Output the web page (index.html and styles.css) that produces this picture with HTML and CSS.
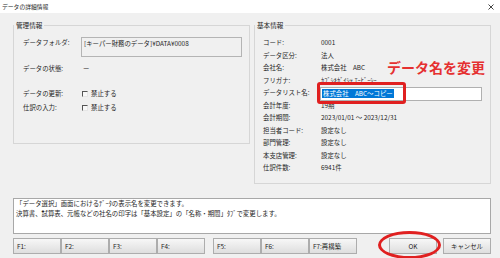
FILE: index.html
```html
<!DOCTYPE html>
<html lang="ja">
<head>
<meta charset="utf-8">
<title>データの詳細情報</title>
<link rel="stylesheet" href="styles.css">
</head>
<body>
<div class="titlebar">
  <span class="title">データの詳細情報</span>
  <svg class="close" width="6" height="6" viewBox="0 0 6 6"><path d="M0.5 0.5L5.5 5.5M5.5 0.5L0.5 5.5" stroke="#444" stroke-width="1"/></svg>
</div>
<div class="main">
  <div class="groups">
    <fieldset class="group group-left">
      <legend>管理情報</legend>
      <div class="mgmt">
        <div class="row">
          <div class="label label-folder">データフォルダ:</div>
          <div class="folder">[キーパー財務のデータ]¥DATA¥0008</div>
        </div>
        <div class="row row-state">
          <div class="label">データの状態:</div>
          <div class="value dash">ー</div>
        </div>
        <div class="row row-update">
          <div class="label">データの更新:</div>
          <div class="value check"><span class="box"></span>禁止する</div>
        </div>
        <div class="row row-entry">
          <div class="label">仕訳の入力:</div>
          <div class="value check"><span class="box"></span>禁止する</div>
        </div>
      </div>
    </fieldset>
    <fieldset class="group group-right">
      <legend>基本情報</legend>
      <div class="info">
        <div class="label">コード:</div><div class="value">0001</div>
        <div class="label">データ区分:</div><div class="value">法人</div>
        <div class="label">会社名:</div><div class="value">株式会社　ABC</div>
        <div class="label">フリガナ:</div><div class="value">ｶﾌﾞｼｷｶﾞｲｼｬ ｴｰﾋﾞｰｼｰ</div>
        <div class="label">データリスト名:</div><div class="value"><div class="listname"><span class="sel">株式会社　ABC〜コピー</span></div></div>
        <div class="label">会計年度:</div><div class="value">19期</div>
        <div class="label">会計期間:</div><div class="value">2023/01/01 〜 2023/12/31</div>
        <div class="label">担当者コード:</div><div class="value">設定なし</div>
        <div class="label">部門管理:</div><div class="value">設定なし</div>
        <div class="label">本支店管理:</div><div class="value">設定なし</div>
        <div class="label">仕訳件数:</div><div class="value">6941件</div>
      </div>
    </fieldset>
  </div>
  <div class="message">
    <div>「データ選択」画面におけるﾃﾞｰﾀの表示名を変更できます。</div>
    <div>決算書、試算表、元帳などの社名の印字は「基本設定」の「名称・期間」ﾀﾌﾞで変更します。</div>
  </div>
  <div class="buttons">
    <div class="fgroup">
      <button class="btn fkey">F1:</button>
      <button class="btn fkey">F2:</button>
      <button class="btn fkey">F3:</button>
      <button class="btn fkey">F4:</button>
    </div>
    <div class="fgroup">
      <button class="btn fkey">F5:</button>
      <button class="btn fkey">F6:</button>
      <button class="btn fkey">F7:再構築</button>
    </div>
    <div class="spacer"></div>
    <button class="btn action">OK</button>
    <button class="btn action">キャンセル</button>
  </div>
</div>
<div class="note">データ名を変更</div>
<div class="mark-box"></div>
<div class="mark-ellipse"></div>
</body>
</html>
```
FILE: styles.css
```css
html, body {
  margin: 0;
  width: 500px;
  height: 258px;
  overflow: hidden;
}
body {
  position: relative;
  background: #f0f0f0;
  font-family: "Noto Sans CJK JP", "Noto Sans", sans-serif;
  font-size: 6.4px;
  color: #1e1e1e;
}
.titlebar {
  height: 13px;
  background: #ffffff;
  display: flex;
  align-items: center;
  justify-content: space-between;
  padding: 0 6px 0 2px;
}
.title {
  font-size: 5.8px;
  line-height: 13px;
}
.close { display: block; }
.main {
  padding: 0 9px 0 13px;
}
.groups {
  display: flex;
  align-items: flex-start;
  gap: 4px;
  margin-top: 7px;
}
.group {
  box-sizing: border-box;
  width: 237px;
  margin: 0;
  padding: 0;
  border: 1px solid #d6d6d6;
  min-width: 0;
}
.group legend {
  padding: 0 2px;
  line-height: 10px;
  font-size: 6.6px;
}
.group-left { height: 124px; }
.group-right { height: 164px; }
.mgmt {
  padding: 7px 6px 0 9px;
}
.row {
  display: flex;
  align-items: flex-start;
  line-height: 10px;
}
.label {
  width: 58px;
  flex: none;
  white-space: nowrap;
}
.label-folder { padding-top: 1px; }
.folder {
  box-sizing: border-box;
  width: 161px;
  height: 20px;
  border: 1px solid #b4b4b4;
  padding: 1px 2px;
  line-height: 10px;
}
.row-state { margin-top: 7px; }
.row-update { margin-top: 15px; }
.row-entry { margin-top: 4px; }
.dash { padding-left: 2px; }
.check {
  display: flex;
  align-items: center;
  gap: 3px;
  padding-left: 1px;
}
.box {
  box-sizing: border-box;
  width: 6px;
  height: 6px;
  border-left: 1px solid #555;
  border-top: 1px solid #555;
  border-right: 1px solid #e6e6e6;
  border-bottom: 1px solid #e6e6e6;
  background: #f8f8f8;
}
.info {
  padding: 7px 8px 0 8px;
  display: grid;
  grid-template-columns: 58px 1fr;
  grid-auto-rows: 12.5px;
  line-height: 12.5px;
}
.info .value { white-space: nowrap; }
.listname {
  box-sizing: border-box;
  margin-left: -1px;
  height: 13.5px;
  background: #ffffff;
  border: 1px solid #b0b0b0;
  padding-left: 1px;
  line-height: 11.5px;
}
.sel {
  background: #0078d7;
  color: #ffffff;
  padding: 0 1px;
}
.message {
  box-sizing: border-box;
  margin-top: 14px;
  height: 36px;
  background: #ffffff;
  border: 1px solid #a8a8a8;
  padding: 0 2px;
  line-height: 10px;
  white-space: nowrap;
}
.buttons {
  display: flex;
  align-items: center;
  margin-top: 4px;
  height: 16px;
}
.fgroup {
  display: flex;
}
.fgroup + .fgroup { margin-left: 8px; }
.spacer { flex: 1; }
.btn {
  box-sizing: border-box;
  height: 16px;
  width: 48px;
  margin: 0;
  border: 1px solid #adadad;
  background: linear-gradient(#f7f7f7, #dedede);
  font-family: inherit;
  font-size: 6.4px;
  color: #222;
  padding: 0;
}
.fkey {
  text-align: left;
  padding-left: 3px;
}
.action { text-align: center; }
.action + .action { margin-left: 6px; }
.note {
  position: absolute;
  left: 387px;
  top: 59px;
  font-size: 14px;
  line-height: 16px;
  font-weight: bold;
  color: #e53030;
  white-space: nowrap;
}
.mark-box {
  position: absolute;
  left: 317px;
  top: 82px;
  width: 89px;
  height: 22px;
  box-sizing: border-box;
  border: 3px solid #e02020;
  border-radius: 3px;
}
.mark-ellipse {
  position: absolute;
  left: 378px;
  top: 231px;
  width: 63px;
  height: 28px;
  box-sizing: border-box;
  border: 3px solid #e02020;
  border-radius: 50%;
}
```
